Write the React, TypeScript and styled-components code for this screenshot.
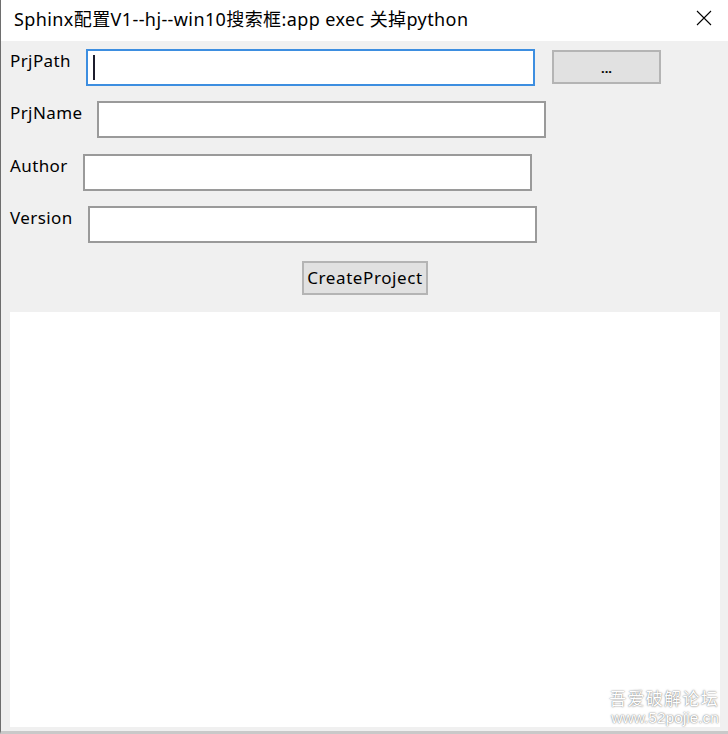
import React from 'react';
import styled, { createGlobalStyle } from 'styled-components';

const GlobalStyle = createGlobalStyle`
  html, body {
    margin: 0;
    padding: 0;
    background: #ffffff;
  }
  * {
    box-sizing: border-box;
  }
`;

const uiFont = `'Noto Sans', 'Noto Sans CJK SC', sans-serif`;

const Window = styled.div`
  width: 728px;
  height: 734px;
  display: flex;
  flex-direction: column;
  border-left: 1px solid #6e6e6e;
  border-bottom: 3px solid #c9c9c9;
  font-family: ${uiFont};
  color: #000;
  overflow: hidden;
`;

const TitleBar = styled.div`
  height: 41px;
  flex: 0 0 41px;
  background: #ffffff;
  display: flex;
  align-items: center;
  padding-left: 13px;
`;

const Title = styled.div`
  flex: 1;
  font-size: 18px;
  letter-spacing: 0.4px;
  white-space: nowrap;
  margin-bottom: 5px;
`;

const CloseButton = styled.div`
  width: 46px;
  height: 41px;
  display: flex;
  align-items: center;
  justify-content: center;
  padding-bottom: 6px;
  margin-right: 1px;
`;

const Body = styled.div`
  flex: 1;
  background: #f0f0f0;
  display: flex;
  flex-direction: column;
  padding: 8px 7px 4px 8px;
`;

const FormRow = styled.div`
  display: flex;
  align-items: flex-start;
  height: 37px;
  margin-bottom: 15.4px;
`;

const Label = styled.div`
  font-size: 17px;
  letter-spacing: 0.4px;
  line-height: 20px;
  margin: 2px 15px 0 1px;
  white-space: nowrap;
`;

const TextBox = styled.div<{ $focused?: boolean }>`
  width: 449px;
  height: 37px;
  background: #ffffff;
  border: 2px solid ${(p) => (p.$focused ? '#3d8ee0' : '#9a9a9a')};
  display: flex;
  align-items: center;
  padding-left: 5px;
`;

const Caret = styled.span`
  display: inline-block;
  width: 2px;
  height: 25px;
  background: #1c1c2c;
`;

const PushButton = styled.button<{ $w: number }>`
  width: ${(p) => p.$w}px;
  height: 34px;
  background: #e1e1e1;
  border: 2px solid #b4b4b4;
  font-family: ${uiFont};
  font-size: 17px;
  letter-spacing: 0.6px;
  color: #000;
  padding: 0;
  display: flex;
  align-items: center;
  justify-content: center;
`;

const BrowseButton = styled(PushButton)`
  margin: 1px 0 0 17px;
  font-size: 13px;
  font-weight: bold;
  letter-spacing: 0;
  padding-top: 2px;
`;

const ActionRow = styled.div`
  display: flex;
  justify-content: center;
  margin: 2px 0 17px 0;
`;

const OutputArea = styled.div`
  flex: 1;
  background: #ffffff;
  margin: 0 1px 0 1px;
  position: relative;
`;

const Watermark = styled.div`
  position: absolute;
  right: 1px;
  bottom: 0;
  display: flex;
  flex-direction: column;
  align-items: flex-end;
  gap: 2px;
  color: #ffffff;
  text-shadow: 0 0 2px rgba(0, 0, 0, 0.5), 0 0 1px rgba(0, 0, 0, 0.3);
  font-family: 'Noto Sans CJK SC', sans-serif;
`;

const WatermarkCn = styled.div`
  font-size: 17px;
  line-height: 18px;
  letter-spacing: 1.3px;
`;

const WatermarkUrl = styled.div`
  font-family: 'Liberation Sans', Arial, sans-serif;
  font-size: 15.5px;
  line-height: 18px;
`;

const fields = [
  { label: 'PrjPath', focused: true },
  { label: 'PrjName' },
  { label: 'Author' },
  { label: 'Version' },
];

const App = () => (
  <>
    <GlobalStyle />
    <Window>
      <TitleBar>
        <Title>Sphinx配置V1--hj--win10搜索框:app exec 关掉python</Title>
        <CloseButton>
          <svg width="16" height="16" viewBox="0 0 16 16">
            <path d="M1 1 L15 15 M15 1 L1 15" stroke="#000" strokeWidth="1.1" />
          </svg>
        </CloseButton>
      </TitleBar>
      <Body>
        {fields.map((f) => (
          <FormRow key={f.label}>
            <Label>{f.label}</Label>
            <TextBox $focused={f.focused}>{f.focused && <Caret />}</TextBox>
            {f.label === 'PrjPath' && <BrowseButton $w={109}>...</BrowseButton>}
          </FormRow>
        ))}
        <ActionRow>
          <PushButton $w={126}>CreateProject</PushButton>
        </ActionRow>
        <OutputArea>
          <Watermark>
            <WatermarkCn>吾爱破解论坛</WatermarkCn>
            <WatermarkUrl>www.52pojie.cn</WatermarkUrl>
          </Watermark>
        </OutputArea>
      </Body>
    </Window>
  </>
);

export default App;
